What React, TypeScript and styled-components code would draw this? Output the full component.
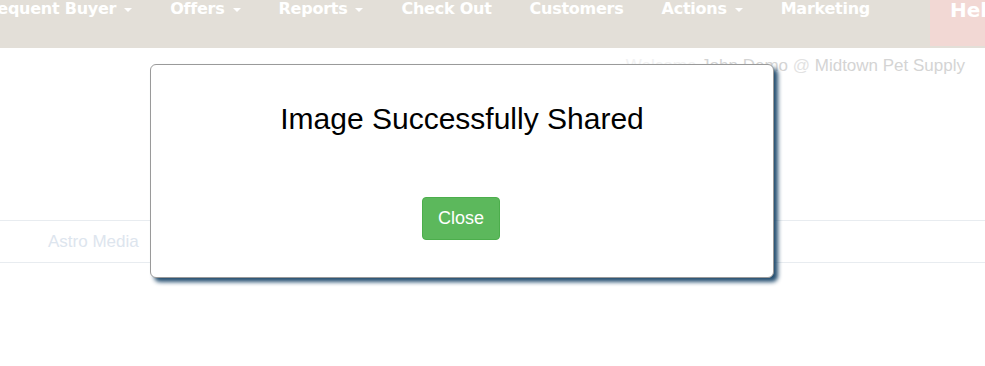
import React from "react";
import styled, { createGlobalStyle } from "styled-components";

const Global = createGlobalStyle`
  html, body { margin: 0; padding: 0; background: #fff; }
  body { width: 985px; height: 366px; overflow: hidden; font-family: Arial, "Liberation Sans", sans-serif; }
`;

const Page = styled.div`
  position: relative;
  width: 985px;
  height: 366px;
  overflow: hidden;
`;

const NavBar = styled.div`
  display: flex;
  align-items: stretch;
  height: 48px;
  background: #e3dfd8;
`;

const NavList = styled.div`
  display: flex;
  flex: 1;
  margin-left: -39px;
  overflow: hidden;
`;

const NavItem = styled.div`
  display: flex;
  align-items: flex-start;
  gap: 8px;
  padding: 0 19px;
  font-family: "DejaVu Sans", Verdana, sans-serif;
  font-weight: bold;
  font-size: 16px;
  line-height: 18px;
  letter-spacing: -0.25px;
  color: #fff;
  white-space: nowrap;
`;

const Caret = styled.span`
  display: inline-block;
  width: 0;
  height: 0;
  margin-top: 8px;
  border-left: 4px solid transparent;
  border-right: 4px solid transparent;
  border-top: 4px solid #fff;
`;

const HelpBox = styled.div`
  width: 55px;
  height: 46px;
  padding-left: 20px;
  box-sizing: border-box;
  background: #f2d8d4;
  color: #fff;
  font-family: "DejaVu Sans", Verdana, sans-serif;
  font-weight: bold;
  font-size: 20px;
  line-height: 20px;
  white-space: nowrap;
  overflow: hidden;
`;

const Welcome = styled.div`
  display: flex;
  justify-content: flex-end;
  padding: 7px 20px 0 0;
  font-size: 17px;
  line-height: 22px;
  color: #d2d2d2;
`;

const Faint = styled.span<{ $tone: string }>`
  color: ${(p) => p.$tone};
  white-space: pre;
`;

const TableRow = styled.div`
  margin-top: 143px;
  height: 41px;
  border-top: 1px solid #e8ecf0;
  border-bottom: 1px solid #e8ecf0;
  display: flex;
  align-items: center;
  padding-left: 48px;
  font-size: 17px;
  color: #dde5ee;
`;

const Modal = styled.div`
  position: absolute;
  left: 150px;
  top: 64px;
  width: 624px;
  height: 214px;
  box-sizing: border-box;
  background: #fff;
  border: 1px solid #9a9a9a;
  border-radius: 6px;
  box-shadow: 4px 4px 4px rgba(25, 70, 105, 0.95);
  display: flex;
  flex-direction: column;
  align-items: center;
`;

const Title = styled.h2`
  margin: 36px 0 0;
  font-family: Arial, "Liberation Sans", sans-serif;
  font-weight: normal;
  font-size: 30px;
  line-height: 36px;
  color: #000;
`;

const CloseButton = styled.button`
  margin-top: 60px;
  margin-right: 2px;
  width: 78px;
  height: 43px;
  padding: 0;
  background: #5cb85c;
  border: 1px solid #4cae4c;
  border-radius: 4px;
  color: #fff;
  font-family: Arial, "Liberation Sans", sans-serif;
  font-size: 18px;
  cursor: pointer;
`;

const navItems: { label: string; caret: boolean }[] = [
  { label: "Frequent Buyer", caret: true },
  { label: "Offers", caret: true },
  { label: "Reports", caret: true },
  { label: "Check Out", caret: false },
  { label: "Customers", caret: false },
  { label: "Actions", caret: true },
  { label: "Marketing", caret: false },
];

export default function App() {
  return (
    <Page>
      <Global />
      <NavBar>
        <NavList>
          {navItems.map((n) => (
            <NavItem key={n.label}>
              {n.label}
              {n.caret && <Caret />}
            </NavItem>
          ))}
        </NavList>
        <HelpBox>Help</HelpBox>
      </NavBar>
      <Welcome>
        <Faint $tone="#f2f2f2">Welcome </Faint>
        <Faint $tone="#d4d4d4">John Demo </Faint>
        <Faint $tone="#e2e2e2">@ </Faint>
        <Faint $tone="#d4d4d4">Midtown Pet Supply</Faint>
      </Welcome>
      <TableRow>Astro Media</TableRow>
      <Modal>
        <Title>Image Successfully Shared</Title>
        <CloseButton>Close</CloseButton>
      </Modal>
    </Page>
  );
}
